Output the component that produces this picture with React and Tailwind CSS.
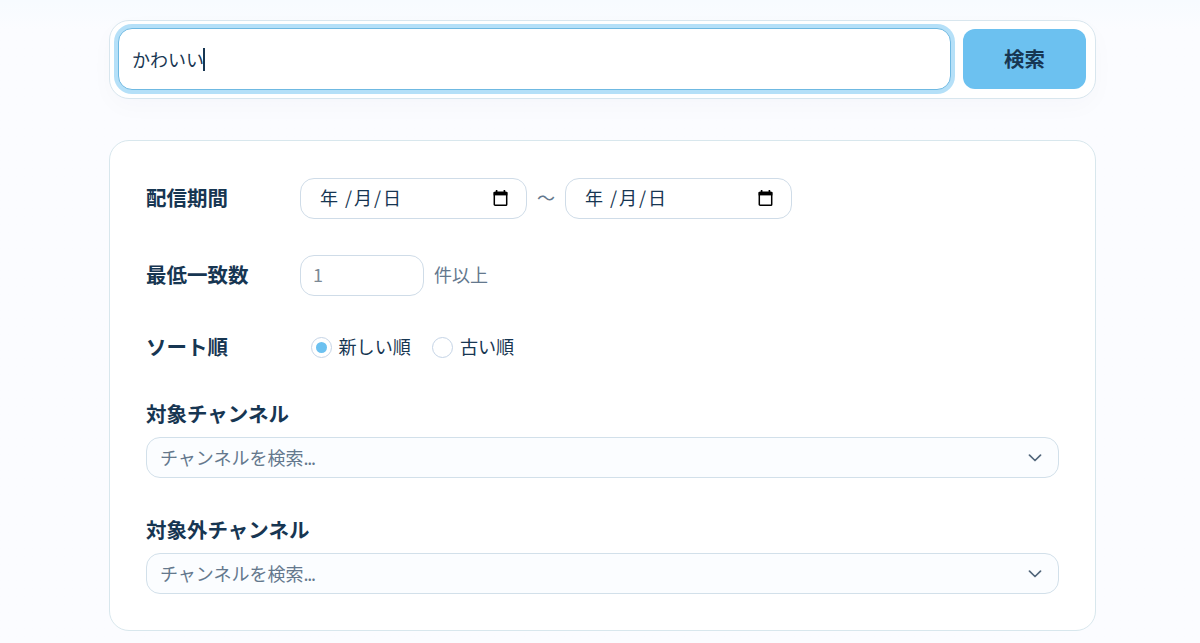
import React from 'react';

function CalendarIcon() {
  return (
    <svg className="h-[17px] w-[15px] shrink-0" viewBox="0 0 15 17" fill="none">
      <path d="M3.6 0v3M11.4 0v3" stroke="#000" strokeWidth="1.6" />
      <rect x="1.3" y="2.3" width="12.4" height="12.9" rx="0.8" stroke="#000" strokeWidth="1.5" />
      <path d="M0.6 2h13.8v3.4H0.6z" fill="#000" />
    </svg>
  );
}

function DateField() {
  return (
    <div className="flex h-[41px] w-[227px] items-center justify-between rounded-[14px] border-[1.5px] border-[#cfdce8] bg-white pr-[18px] pl-[19px]">
      <div className="flex items-center pb-[2px] text-[18px] leading-none">
        <span className="w-[25px]">年</span>
        <span className="w-[9px]">/</span>
        <span className="w-[20px]">月</span>
        <span className="w-[9px]">/</span>
        <span>日</span>
      </div>
      <CalendarIcon />
    </div>
  );
}

function Label({ children }) {
  return <div className="w-[154px] shrink-0 text-[20.5px] leading-[30px] font-bold whitespace-nowrap">{children}</div>;
}

function Radio({ checked, children }) {
  return (
    <label className="flex items-center gap-[7px] text-[18.1px] leading-[26px] whitespace-nowrap">
      <span className="flex size-[21px] items-center justify-center rounded-full border border-[#c5d4e6] bg-white">
        {checked && <span className="size-[11px] rounded-full bg-[#6cc1f0]" />}
      </span>
      <span className="pb-[2px]">{children}</span>
    </label>
  );
}

function ChannelSelect({ label }) {
  return (
    <div>
      <Label>{label}</Label>
      <div className="mt-[9px] flex h-[41px] items-center justify-between rounded-[14px] border border-[#d2e0ea] bg-[#fbfdff] pr-[16px] pl-[13px]">
        <span className="pb-[2px] text-[18px] leading-none text-[#64788d]">
          チャンネルを検索<span className="tracking-[-1.3px]">...</span>
        </span>
        <svg className="h-[8px] w-[14px]" viewBox="0 0 14 8" fill="none" stroke="#52677b" strokeWidth="1.7" strokeLinecap="round" strokeLinejoin="round">
          <path d="M1.5 1.2 7 6.5l5.5-5.3" />
        </svg>
      </div>
    </div>
  );
}

export default function App() {
  return (
    <div className="h-[643px] overflow-hidden bg-[#fbfcff] bg-linear-to-b from-[#f7fbff] to-[#fbfcff] to-[30px] pt-5 font-['Noto_Sans_CJK_JP',sans-serif] text-[#173652]">
      <main className="ml-[109px] w-[987px]">
        <div className="flex h-[79px] items-start rounded-[20px] border border-[#d8e6ee] bg-white pt-[7px] pr-[9px] pl-2 shadow-[0_8px_24px_rgba(23,54,82,0.022)]">
          <div className="flex h-[62px] w-[833px] items-center rounded-[14px] border-[1.5px] border-[#6fb9e2] bg-white pl-[13px] text-[18px] shadow-[0_0_0_4px_#b5e0f8]">
            <span className="pb-px leading-none">かわいい</span>
            <span className="-ml-px h-[23px] w-[1.5px] bg-[#173652]" />
          </div>
          <button className="mt-px ml-3 h-[60px] w-[123px] rounded-[12px] bg-[#6cc1f0] pb-[2px] text-[20.5px] leading-none font-bold">検索</button>
        </div>

        <div className="mt-[41px] h-[491px] rounded-[20px] border border-[#d8e7ed] bg-white px-9 pt-9">
          <div className="flex h-[42px] items-center">
            <div className="pb-[2px]"><Label>配信期間</Label></div>
            <DateField />
            <span className="w-[38px] pb-[2px] text-center text-[18px] leading-none text-[#64788d]">〜</span>
            <DateField />
          </div>
          <div className="mt-[35px] flex h-[42px] items-center">
            <div className="pb-[2px]"><Label>最低一致数</Label></div>
            <div className="flex h-[41px] w-[124px] items-center rounded-[14px] border-[1.5px] border-[#cfdce8] pb-[2px] pl-3 text-[18px] text-[#7c8995]">1</div>
            <span className="ml-[10px] pb-[2px] text-[18px] leading-none text-[#64788d]">件以上</span>
          </div>
          <div className="mt-[35px] flex h-[32px] items-center">
            <div className="pb-[2px]"><Label>ソート順</Label></div>
            <div className="ml-[10.5px] flex gap-[21px]">
              <Radio checked>新しい順</Radio>
              <Radio>古い順</Radio>
            </div>
          </div>
          <div className="mt-[35px] flex flex-col gap-9">
            <ChannelSelect label="対象チャンネル" />
            <ChannelSelect label="対象外チャンネル" />
          </div>
        </div>
      </main>
    </div>
  );
}
